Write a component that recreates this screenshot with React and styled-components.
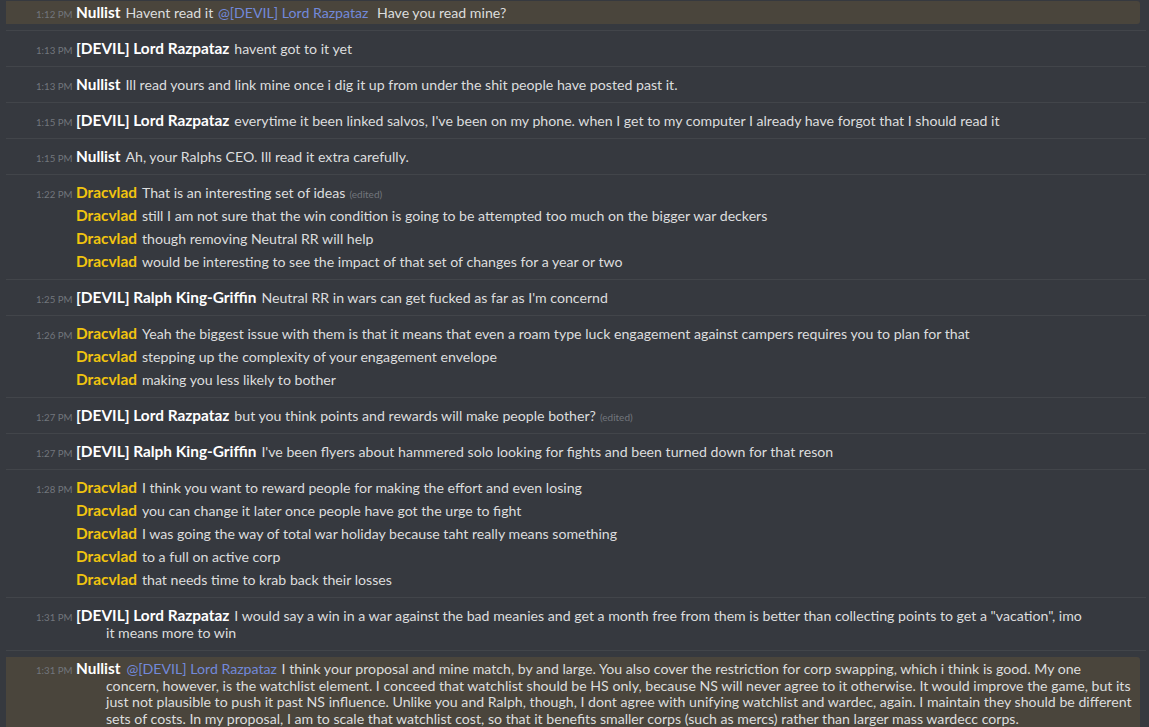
import React from "react";
import styled, { createGlobalStyle } from "styled-components";

const Global = createGlobalStyle`
  html, body {
    margin: 0;
    padding: 0;
    background: #36393f;
    overflow: hidden;
  }
  body {
    font-family: Lato, "Open Sans", sans-serif;
  }
`;

const Chat = styled.div`
  width: 1149px;
  height: 727px;
  overflow: hidden;
  background: #36393f;
`;

const List = styled.div`
  margin-top: -5px;
  padding: 0 3px 0 6px;
`;

const Group = styled.div`
  border-top: ${(p) => (p.first ? "none" : "1px solid #42454a")};
  padding: 6px 6px 6px 0;
`;

const Message = styled.div`
  padding: 3px 0 3px 100px;
  text-indent: -70px;
  line-height: ${(p) => (p.wrap ? "16.5px" : "17px")};
  font-size: 14.15px;
  color: #dcddde;
  background: ${(p) => (p.mentioned ? "#4a453c" : "transparent")};
  border-radius: 0 3px 3px 0;
`;

const Time = styled.span`
  display: inline-block;
  width: 35px;
  margin-right: 5px;
  text-indent: 0;
  text-align: right;
  font-size: 9.7px;
  line-height: 10px;
  color: #72767d;
  white-space: nowrap;
`;

const Name = styled.span`
  font-weight: 700;
  font-size: 15.4px;
  color: ${(p) => p.color || "#ffffff"};
  margin-right: 5px;
`;

const Mention = styled.span`
  color: #7289da;
  padding: 0 1px;
  margin-right: ${(p) => (p.gap ? "4px" : "0")};
`;

const Edited = styled.span`
  font-size: 10px;
  line-height: 10px;
  color: #72767d;
  margin-left: 4px;
`;

const GOLD = "#f1c40f";

const groups = [
  [
    {
      time: "1:12 PM",
      name: "Nullist",
      mentioned: true,
      body: (
        <>
          Havent read it <Mention gap>@[DEVIL] Lord Razpataz</Mention>{" "}
          Have you read mine?
        </>
      ),
    },
  ],
  [{ time: "1:13 PM", name: "[DEVIL] Lord Razpataz", body: "havent got to it yet" }],
  [
    {
      time: "1:13 PM",
      name: "Nullist",
      body: "Ill read yours and link mine once i dig it up from under the shit people have posted past it.",
    },
  ],
  [
    {
      time: "1:15 PM",
      name: "[DEVIL] Lord Razpataz",
      body: "everytime it been linked salvos, I've been on my phone. when I get to my computer I already have forgot that I should read it",
    },
  ],
  [{ time: "1:15 PM", name: "Nullist", body: "Ah, your Ralphs CEO. Ill read it extra carefully." }],
  [
    { time: "1:22 PM", name: "Dracvlad", color: GOLD, body: "That is an interesting set of ideas", edited: true },
    {
      name: "Dracvlad",
      color: GOLD,
      body: "still I am not sure that the win condition is going to be attempted too much on the bigger war deckers",
    },
    { name: "Dracvlad", color: GOLD, body: "though removing Neutral RR will help" },
    {
      name: "Dracvlad",
      color: GOLD,
      body: "would be interesting to see the impact of that set of changes for a year or two",
    },
  ],
  [
    {
      time: "1:25 PM",
      name: "[DEVIL] Ralph King-Griffin",
      body: "Neutral RR in wars can get fucked as far as I'm concernd",
    },
  ],
  [
    {
      time: "1:26 PM",
      name: "Dracvlad",
      color: GOLD,
      body: "Yeah the biggest issue with them is that it means that even a roam type luck engagement against campers requires you to plan for that",
    },
    { name: "Dracvlad", color: GOLD, body: "stepping up the complexity of your engagement envelope" },
    { name: "Dracvlad", color: GOLD, body: "making you less likely to bother" },
  ],
  [
    {
      time: "1:27 PM",
      name: "[DEVIL] Lord Razpataz",
      body: "but you think points and rewards will make people bother?",
      edited: true,
    },
  ],
  [
    {
      time: "1:27 PM",
      name: "[DEVIL] Ralph King-Griffin",
      body: "I've been flyers about hammered solo looking for fights and been turned down for that reson",
    },
  ],
  [
    {
      time: "1:28 PM",
      name: "Dracvlad",
      color: GOLD,
      body: "I think you want to reward people for making the effort and even losing",
    },
    { name: "Dracvlad", color: GOLD, body: "you can change it later once people have got the urge to fight" },
    {
      name: "Dracvlad",
      color: GOLD,
      body: "I was going the way of total war holiday because taht really means something",
    },
    { name: "Dracvlad", color: GOLD, body: "to a full on active corp" },
    { name: "Dracvlad", color: GOLD, body: "that needs time to krab back their losses" },
  ],
  [
    {
      time: "1:31 PM",
      name: "[DEVIL] Lord Razpataz",
      body: (
        <>
          I would say a win in a war against the bad meanies and get a month free from them is
          better than collecting points to get a "vacation", imo
          <br />
          it means more to win
        </>
      ),
    },
  ],
  [
    {
      time: "1:31 PM",
      name: "Nullist",
      mentioned: true,
      wrap: true,
      body: (
        <>
          <Mention>@[DEVIL] Lord Razpataz</Mention> I think your proposal and mine match, by and
          large. You also cover the restriction for corp swapping, which i think is good. My one
          <br />
          concern, however, is the watchlist element. I conceed that watchlist should be HS only,
          because NS will never agree to it otherwise. It would improve the game, but its
          <br />
          just not plausible to push it past NS influence. Unlike you and Ralph, though, I dont
          agree with unifying watchlist and wardec, again. I maintain they should be different
          <br />
          sets of costs. In my proposal, I am to scale that watchlist cost, so that it benefits
          smaller corps (such as mercs) rather than larger mass wardecc corps.
        </>
      ),
    },
  ],
];

export default function App() {
  return (
    <Chat>
      <Global />
      <List>
        {groups.map((msgs, gi) => (
          <Group key={gi} first={gi === 0}>
            {msgs.map((m, mi) => (
              <Message key={mi} mentioned={m.mentioned} wrap={m.wrap}>
                <Time>{m.time || ""}</Time>
                <Name color={m.color}>{m.name}</Name>
                {m.body}
                {m.edited && <Edited>(edited)</Edited>}
              </Message>
            ))}
          </Group>
        ))}
      </List>
    </Chat>
  );
}
